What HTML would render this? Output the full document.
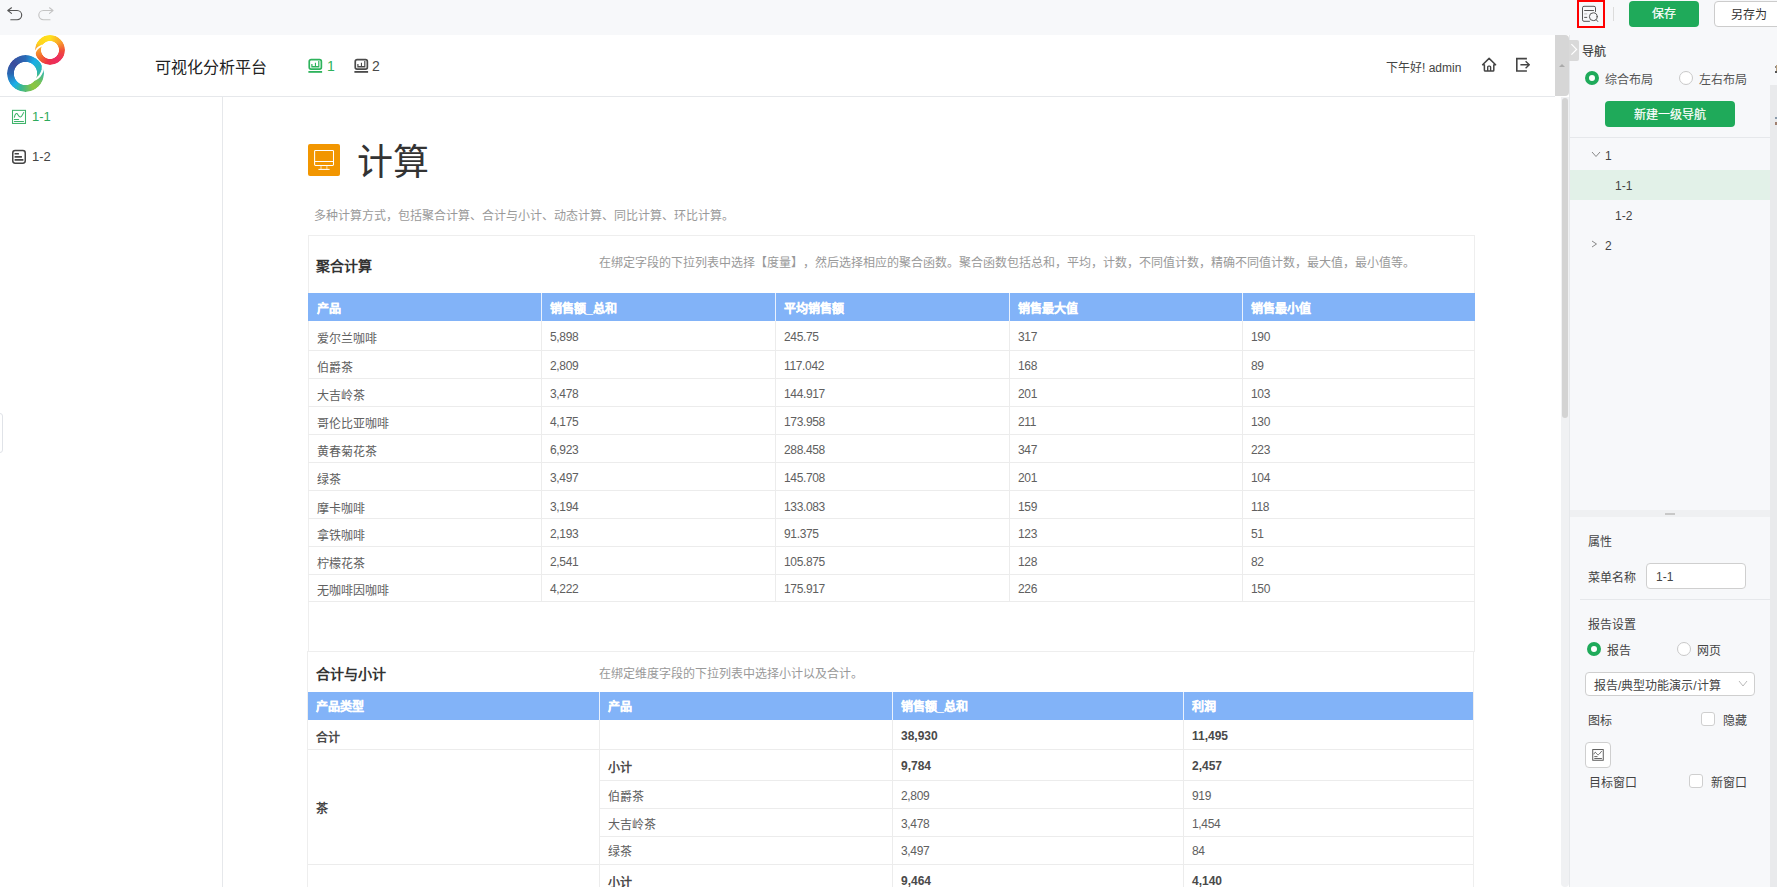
<!DOCTYPE html>
<html lang="zh-CN"><head><meta charset="utf-8">
<style>
*{box-sizing:border-box;margin:0;padding:0}
html,body{width:1777px;height:887px;overflow:hidden;background:#fff;text-spacing-trim:space-all;font-family:"Liberation Sans",sans-serif;color:#333}
.a{position:absolute;white-space:nowrap}
.t12{font-size:12px;line-height:16px}
table.g{border-collapse:collapse;table-layout:fixed;position:absolute}
table.g td,table.g th{border:1px solid #ebebeb;font-size:12px;color:#555;text-align:left;padding:0 0 0 8px;white-space:nowrap;font-weight:normal;line-height:14px}
table.g th{background:#80b4f6;color:#fff;font-weight:bold;border-color:#80b4f6;border-left-color:#e8f0fb}
table.g th:first-child{border-left-color:#80b4f6}
table.g td.b{font-weight:bold;color:#444}
</style></head><body>
<!-- toolbar -->
<div class="a" style="left:0;top:0;width:1777px;height:35px;background:#f7f8fa"></div>
<svg class="a" style="left:0;top:0" width="64" height="32" viewBox="0 0 64 32">
 <g fill="none" stroke-width="1.15" stroke-linecap="round" stroke-linejoin="round">
  <path d="M11.5 7.8 L7.8 10.5 L11.5 13.4 M7.8 10.5 H17.1 A4.6 4.6 0 0 1 17.1 19.7 H10.8" stroke="#555"/>
  <path d="M49.5 7.8 L53 10.5 L49.5 13.4 M53 10.5 H43.4 A4.6 4.6 0 0 0 43.4 19.7 H50" stroke="#c4c4c4"/>
 </g>
</svg>
<!-- preview-zoom icon with red box -->
<div class="a" style="left:1577px;top:0;width:28px;height:28px;border:2px solid #f00"></div>
<svg class="a" style="left:1577px;top:0" width="28" height="28" viewBox="0 0 28 28">
 <g fill="none" stroke="#555" stroke-width="1" stroke-linecap="round">
  <path d="M12.5 21.3 H7 Q5.5 21.3 5.5 19.8 V7.8 Q5.5 6.3 7 6.3 H17 Q18.5 6.3 18.5 7.8 V11.5"/>
  <path d="M7.6 10.5 H16.5 M7.6 17.4 H9.8"/>
  <path d="M7.6 13.9 H9.8" stroke="#bbb"/>
  <circle cx="16.3" cy="16.7" r="3.9"/>
  <path d="M19.1 19.6 L20.8 21.5"/>
 </g>
</svg>
<div class="a" style="left:1613px;top:7px;width:1px;height:14px;background:#dcdcdc"></div>
<div class="a" style="left:1629px;top:1px;width:70px;height:26px;background:#1faa5a;border-radius:4px;color:#fff;font-size:12px;line-height:26px;text-align:center;-webkit-text-stroke:0.2px #fff">保存</div>
<div class="a" style="left:1714px;top:1px;width:80px;height:26px;background:#fff;border:1px solid #ccc;border-radius:4px;color:#333;font-size:12px;line-height:26px;padding-left:16px">另存为</div>

<!-- main -->
<div class="a" style="left:0;top:35px;width:1555px;height:61px;background:#fff"></div>
<div class="a" style="left:0;top:96px;width:1555px;height:1px;background:#e6e8eb"></div>
<div class="a" style="left:0;top:97px;width:1561px;height:790px;background:#fff"></div>
<div class="a" style="left:222px;top:97px;width:1px;height:790px;background:#e6e8eb"></div>
<!-- header scrollbar piece -->
<div class="a" style="left:1555px;top:35px;width:14px;height:61px;background:#d6d6d6;border-radius:0 4px 4px 0"></div>
<div class="a" style="left:1559px;top:64px;width:0;height:0;border-left:3px solid transparent;border-right:3px solid transparent;border-bottom:3px solid #aaa"></div>
<!-- content scrollbar -->
<div class="a" style="left:1561px;top:97px;width:8px;height:790px;background:#f0f1f3;border-radius:0 0 4px 4px"></div>
<div class="a" style="left:1562px;top:98px;width:6px;height:320px;background:#d3d3d3;border-radius:3px"></div>
<!-- left tiny tab -->
<div class="a" style="left:-6px;top:413px;width:9px;height:40px;border:1px solid #e0e3e8;border-radius:3px"></div>

<!-- logo -->
<div class="a" style="left:7px;top:54.6px;width:37.2px;height:37.2px;border-radius:50%;background:conic-gradient(from 0deg,#2a6ab6 0deg,#1aaee6 35deg,#2fb6a8 85deg,#7cc352 125deg,#8dc63f 150deg,#3cb88e 195deg,#1aaee8 225deg,#2a66b2 270deg,#3b4b9c 310deg,#2a6ab6 360deg);-webkit-mask:radial-gradient(circle,transparent 11.2px,#000 11.9px);mask:radial-gradient(circle,transparent 11.2px,#000 11.9px)"></div>
<div class="a" style="left:35px;top:35px;width:30px;height:30px;border-radius:50%;background:conic-gradient(from 0deg,#ffe11c 0deg,#f9a52c 50deg,#f04a3a 95deg,#ec2d62 140deg,#ee3048 190deg,#f26c2e 235deg,#f8a22e 275deg,#ffd41e 300deg,#ffe11c 360deg);-webkit-mask:radial-gradient(circle,transparent 8.6px,#000 9.3px);mask:radial-gradient(circle,transparent 8.6px,#000 9.3px)"></div>
<svg class="a" style="left:0;top:0" width="80" height="100" viewBox="0 0 80 100">
 <path d="M42.86,64.78 L42.90,65.55 L42.90,66.30 L42.88,67.05 L42.82,67.78 L42.73,68.50 L42.62,69.21 L42.47,69.90 L42.30,70.57 L42.10,71.23 L41.88,71.87 L41.63,72.49 L41.36,73.09 L41.07,73.67 L40.75,74.22 L40.42,74.76 L40.07,75.27 L39.70,75.75 L39.31,76.21 L38.91,76.65 L38.50,77.06 L38.08,77.45 L37.64,77.81 L37.20,78.14 L36.75,78.45 L36.29,78.73 L35.83,78.98 L35.36,79.20 L34.89,79.40 L34.42,79.58 L33.95,79.73" fill="none" stroke="#fff" stroke-width="2.2" stroke-linecap="round"/>
 <path d="M34.35,54.39 L34.51,53.80 L34.70,53.23 L34.90,52.67 L35.12,52.13 L35.37,51.61 L35.63,51.10 L35.91,50.62 L36.20,50.15 L36.51,49.71 L36.83,49.28 L37.17,48.87 L37.52,48.49 L37.88,48.13 L38.25,47.79 L38.62,47.47 L39.01,47.17 L39.40,46.90 L39.80,46.65 L40.20,46.42 L40.61,46.21 L41.02,46.03 L41.43,45.87 L41.84,45.73 L42.25,45.62 L42.66,45.53 L43.07,45.45 L43.47,45.40 L43.87,45.38 L44.26,45.37 L44.65,45.38" fill="none" stroke="#fff" stroke-width="1.8" stroke-linecap="round"/>
</svg>
<div class="a" style="left:155px;top:58px;font-size:16px;line-height:20px;color:#222">可视化分析平台</div>


<!-- header nav -->
<svg class="a" style="left:306px;top:56px" width="20" height="20" viewBox="0 0 20 20">
 <rect x="3.25" y="3.65" width="12.1" height="9.5" rx="1.8" fill="none" stroke="#2eb35c" stroke-width="1.7"/>
 <path d="M5.3 8 H6.5 V10 H8.9 V6.7 H10 V10 H12.2 V5.1 H13.4 V11.6 H5.3 Z" fill="#2eb35c"/>
 <rect x="2.4" y="15" width="13.7" height="1.8" fill="#2eb35c"/>
</svg>
<div class="a" style="left:327px;top:57px;font-size:14px;line-height:18px;color:#2eb35c">1</div>
<svg class="a" style="left:352px;top:56px" width="20" height="20" viewBox="0 0 20 20">
 <rect x="3.25" y="3.65" width="12.1" height="9.5" rx="1.8" fill="none" stroke="#4a4a4a" stroke-width="1.7"/>
 <path d="M5.3 8 H6.5 V10 H8.9 V6.7 H10 V10 H12.2 V5.1 H13.4 V11.6 H5.3 Z" fill="#4a4a4a"/>
 <rect x="2.4" y="15" width="13.7" height="1.8" fill="#4a4a4a"/>
</svg>
<div class="a" style="left:372px;top:57px;font-size:14px;line-height:18px;color:#4a4a4a">2</div>
<div class="a t12" style="left:1386px;top:60px;color:#444">下午好! admin</div>
<svg class="a" style="left:1480px;top:56px" width="18" height="18" viewBox="0 0 18 18">
 <path d="M4.4 8.8 H2.6 L9.1 2.4 L15.6 8.8 H13.8 V14.2 Q13.8 15 13 15 H5.2 Q4.4 15 4.4 14.2 Z" fill="none" stroke="#444" stroke-width="1.5" stroke-linejoin="round"/>
 <path d="M7.7 15 V11 Q7.7 10.1 8.6 10.1 H9.7 Q10.6 10.1 10.6 11 V15" fill="none" stroke="#444" stroke-width="1.4"/>
</svg>
<svg class="a" style="left:1514px;top:56px" width="18" height="18" viewBox="0 0 18 18">
 <path d="M12.9 2.6 H2.8 V15 H12.9" fill="none" stroke="#444" stroke-width="1.6"/>
 <path d="M6.4 8.7 H15.2 M11.6 5.2 L15.3 8.7 L11.6 12.3" fill="none" stroke="#444" stroke-width="1.35" stroke-linejoin="round"/>
</svg>

<!-- sidebar -->
<svg class="a" style="left:11px;top:109px" width="16" height="16" viewBox="0 0 16 16">
 <rect x="1.5" y="1.35" width="13" height="13.1" fill="none" stroke="#3db36a" stroke-width="1.05"/>
 <path d="M3.3 8.6 C4 5 5.3 3.4 6.7 5.4 C7.8 7.2 8.3 8.4 9.6 8 C10.8 7.6 11.6 5 12.9 3.2" fill="none" stroke="#3db36a" stroke-width="1.05"/>
 <path d="M3.3 10.4 H7.6 M3.3 12.4 H12.5" stroke="#3db36a" stroke-width="1.05" stroke-linecap="round"/>
</svg>
<div class="a" style="left:32px;top:108px;font-size:13px;line-height:18px;color:#2eaa5c">1-1</div>
<svg class="a" style="left:11px;top:149px" width="16" height="16" viewBox="0 0 16 16">
 <rect x="1.75" y="1.6" width="12.5" height="12.55" rx="2.4" fill="none" stroke="#444" stroke-width="1.5"/>
 <path d="M3.6 4.8 H7.9 M3.6 7.9 H10.9 M3.6 10.9 H12.4" stroke="#444" stroke-width="1.6"/>
</svg>
<div class="a" style="left:32px;top:148px;font-size:13px;line-height:18px;color:#444">1-2</div>

<!-- page title -->
<div class="a" style="left:308px;top:144px;width:32px;height:32px;background:#f29600;border-radius:2px"></div>
<svg class="a" style="left:308px;top:144px" width="32" height="32" viewBox="0 0 32 32">
 <rect x="6.6" y="6.4" width="18.9" height="15" rx="0.9" fill="none" stroke="#fff" stroke-width="1.05"/>
 <path d="M6.6 17.5 H25.5" stroke="#fff" stroke-width="1.05"/>
 <path d="M13 21.9 V25 M18.9 21.9 V25" stroke="#fde3b8" stroke-width="0.9"/>
 <path d="M10.8 25.4 H21.2" stroke="#fff" stroke-width="1" stroke-linecap="round"/>
</svg>
<div class="a" style="left:357px;top:141px;font-size:36px;line-height:44px;color:#333">计算</div>
<div class="a t12" style="left:314px;top:208px;color:#999">多种计算方式，包括聚合计算、合计与小计、动态计算、同比计算、环比计算。</div>

<div class="a" style="left:308px;top:235px;width:1167px;height:417px;border:1px solid #eeeeee;background:#fff"></div>
<div class="a" style="left:316px;top:258px;font-size:14px;line-height:16px;font-weight:bold;color:#333">聚合计算</div>
<div class="a t12" style="left:599px;top:255px;color:#999">在绑定字段的下拉列表中选择【度量】，然后选择相应的聚合函数。聚合函数包括总和，平均，计数，不同值计数，精确不同值计数，最大值，最小值等。</div>
<div class="a" style="left:308px;top:293px;width:1167px;height:28px;background:#82b3f8"></div>
<div class="a" style="left:541px;top:293px;width:1px;height:28px;background:#e9f1fd"></div>
<div class="a" style="left:775px;top:293px;width:1px;height:28px;background:#e9f1fd"></div>
<div class="a" style="left:1009px;top:293px;width:1px;height:28px;background:#e9f1fd"></div>
<div class="a" style="left:1242px;top:293px;width:1px;height:28px;background:#e9f1fd"></div>
<div class="a t12" style="left:317px;top:301px;color:#fff;font-weight:bold;-webkit-text-stroke:0.25px #fff">产品</div>
<div class="a t12" style="left:550px;top:301px;color:#fff;font-weight:bold;-webkit-text-stroke:0.25px #fff">销售额_总和</div>
<div class="a t12" style="left:784px;top:301px;color:#fff;font-weight:bold;-webkit-text-stroke:0.25px #fff">平均销售额</div>
<div class="a t12" style="left:1018px;top:301px;color:#fff;font-weight:bold;-webkit-text-stroke:0.25px #fff">销售最大值</div>
<div class="a t12" style="left:1251px;top:301px;color:#fff;font-weight:bold;-webkit-text-stroke:0.25px #fff">销售最小值</div>
<div class="a" style="left:541px;top:321px;width:1px;height:281px;background:#ececec"></div>
<div class="a" style="left:775px;top:321px;width:1px;height:281px;background:#ececec"></div>
<div class="a" style="left:1009px;top:321px;width:1px;height:281px;background:#ececec"></div>
<div class="a" style="left:1242px;top:321px;width:1px;height:281px;background:#ececec"></div>
<div class="a" style="left:308px;top:350px;width:1167px;height:1px;background:#ececec"></div>
<div class="a" style="left:308px;top:378px;width:1167px;height:1px;background:#ececec"></div>
<div class="a" style="left:308px;top:406px;width:1167px;height:1px;background:#ececec"></div>
<div class="a" style="left:308px;top:434px;width:1167px;height:1px;background:#ececec"></div>
<div class="a" style="left:308px;top:462px;width:1167px;height:1px;background:#ececec"></div>
<div class="a" style="left:308px;top:490px;width:1167px;height:1px;background:#ececec"></div>
<div class="a" style="left:308px;top:518px;width:1167px;height:1px;background:#ececec"></div>
<div class="a" style="left:308px;top:546px;width:1167px;height:1px;background:#ececec"></div>
<div class="a" style="left:308px;top:574px;width:1167px;height:1px;background:#ececec"></div>
<div class="a" style="left:308px;top:601px;width:1167px;height:1px;background:#ececec"></div>
<div class="a t12" style="left:317px;top:331px;color:#606060">爱尔兰咖啡</div>
<div class="a t12" style="left:550px;top:329px;color:#606060;letter-spacing:-0.35px">5,898</div>
<div class="a t12" style="left:784px;top:329px;color:#606060;letter-spacing:-0.35px">245.75</div>
<div class="a t12" style="left:1018px;top:329px;color:#606060;letter-spacing:-0.35px">317</div>
<div class="a t12" style="left:1251px;top:329px;color:#606060;letter-spacing:-0.35px">190</div>
<div class="a t12" style="left:317px;top:360px;color:#606060">伯爵茶</div>
<div class="a t12" style="left:550px;top:358px;color:#606060;letter-spacing:-0.35px">2,809</div>
<div class="a t12" style="left:784px;top:358px;color:#606060;letter-spacing:-0.35px">117.042</div>
<div class="a t12" style="left:1018px;top:358px;color:#606060;letter-spacing:-0.35px">168</div>
<div class="a t12" style="left:1251px;top:358px;color:#606060;letter-spacing:-0.35px">89</div>
<div class="a t12" style="left:317px;top:388px;color:#606060">大吉岭茶</div>
<div class="a t12" style="left:550px;top:386px;color:#606060;letter-spacing:-0.35px">3,478</div>
<div class="a t12" style="left:784px;top:386px;color:#606060;letter-spacing:-0.35px">144.917</div>
<div class="a t12" style="left:1018px;top:386px;color:#606060;letter-spacing:-0.35px">201</div>
<div class="a t12" style="left:1251px;top:386px;color:#606060;letter-spacing:-0.35px">103</div>
<div class="a t12" style="left:317px;top:416px;color:#606060">哥伦比亚咖啡</div>
<div class="a t12" style="left:550px;top:414px;color:#606060;letter-spacing:-0.35px">4,175</div>
<div class="a t12" style="left:784px;top:414px;color:#606060;letter-spacing:-0.35px">173.958</div>
<div class="a t12" style="left:1018px;top:414px;color:#606060;letter-spacing:-0.35px">211</div>
<div class="a t12" style="left:1251px;top:414px;color:#606060;letter-spacing:-0.35px">130</div>
<div class="a t12" style="left:317px;top:444px;color:#606060">黄春菊花茶</div>
<div class="a t12" style="left:550px;top:442px;color:#606060;letter-spacing:-0.35px">6,923</div>
<div class="a t12" style="left:784px;top:442px;color:#606060;letter-spacing:-0.35px">288.458</div>
<div class="a t12" style="left:1018px;top:442px;color:#606060;letter-spacing:-0.35px">347</div>
<div class="a t12" style="left:1251px;top:442px;color:#606060;letter-spacing:-0.35px">223</div>
<div class="a t12" style="left:317px;top:472px;color:#606060">绿茶</div>
<div class="a t12" style="left:550px;top:470px;color:#606060;letter-spacing:-0.35px">3,497</div>
<div class="a t12" style="left:784px;top:470px;color:#606060;letter-spacing:-0.35px">145.708</div>
<div class="a t12" style="left:1018px;top:470px;color:#606060;letter-spacing:-0.35px">201</div>
<div class="a t12" style="left:1251px;top:470px;color:#606060;letter-spacing:-0.35px">104</div>
<div class="a t12" style="left:317px;top:501px;color:#606060">摩卡咖啡</div>
<div class="a t12" style="left:550px;top:499px;color:#606060;letter-spacing:-0.35px">3,194</div>
<div class="a t12" style="left:784px;top:499px;color:#606060;letter-spacing:-0.35px">133.083</div>
<div class="a t12" style="left:1018px;top:499px;color:#606060;letter-spacing:-0.35px">159</div>
<div class="a t12" style="left:1251px;top:499px;color:#606060;letter-spacing:-0.35px">118</div>
<div class="a t12" style="left:317px;top:528px;color:#606060">拿铁咖啡</div>
<div class="a t12" style="left:550px;top:526px;color:#606060;letter-spacing:-0.35px">2,193</div>
<div class="a t12" style="left:784px;top:526px;color:#606060;letter-spacing:-0.35px">91.375</div>
<div class="a t12" style="left:1018px;top:526px;color:#606060;letter-spacing:-0.35px">123</div>
<div class="a t12" style="left:1251px;top:526px;color:#606060;letter-spacing:-0.35px">51</div>
<div class="a t12" style="left:317px;top:556px;color:#606060">柠檬花茶</div>
<div class="a t12" style="left:550px;top:554px;color:#606060;letter-spacing:-0.35px">2,541</div>
<div class="a t12" style="left:784px;top:554px;color:#606060;letter-spacing:-0.35px">105.875</div>
<div class="a t12" style="left:1018px;top:554px;color:#606060;letter-spacing:-0.35px">128</div>
<div class="a t12" style="left:1251px;top:554px;color:#606060;letter-spacing:-0.35px">82</div>
<div class="a t12" style="left:317px;top:583px;color:#606060">无咖啡因咖啡</div>
<div class="a t12" style="left:550px;top:581px;color:#606060;letter-spacing:-0.35px">4,222</div>
<div class="a t12" style="left:784px;top:581px;color:#606060;letter-spacing:-0.35px">175.917</div>
<div class="a t12" style="left:1018px;top:581px;color:#606060;letter-spacing:-0.35px">226</div>
<div class="a t12" style="left:1251px;top:581px;color:#606060;letter-spacing:-0.35px">150</div>
<div class="a" style="left:307px;top:651px;width:1167px;height:300px;border:1px solid #eeeeee;background:#fff"></div>
<div class="a" style="left:316px;top:666px;font-size:14px;line-height:16px;font-weight:bold;color:#333">合计与小计</div>
<div class="a t12" style="left:599px;top:666px;color:#999">在绑定维度字段的下拉列表中选择小计以及合计。</div>
<div class="a" style="left:308px;top:692px;width:1165px;height:28px;background:#82b3f8"></div>
<div class="a" style="left:599px;top:692px;width:1px;height:28px;background:#e9f1fd"></div>
<div class="a" style="left:892px;top:692px;width:1px;height:28px;background:#e9f1fd"></div>
<div class="a" style="left:1183px;top:692px;width:1px;height:28px;background:#e9f1fd"></div>
<div class="a t12" style="left:316px;top:699px;color:#fff;font-weight:bold;-webkit-text-stroke:0.25px #fff">产品类型</div>
<div class="a t12" style="left:608px;top:699px;color:#fff;font-weight:bold;-webkit-text-stroke:0.25px #fff">产品</div>
<div class="a t12" style="left:901px;top:699px;color:#fff;font-weight:bold;-webkit-text-stroke:0.25px #fff">销售额_总和</div>
<div class="a t12" style="left:1192px;top:699px;color:#fff;font-weight:bold;-webkit-text-stroke:0.25px #fff">利润</div>
<div class="a" style="left:599px;top:720px;width:1px;height:170px;background:#ececec"></div>
<div class="a" style="left:892px;top:720px;width:1px;height:170px;background:#ececec"></div>
<div class="a" style="left:1183px;top:720px;width:1px;height:170px;background:#ececec"></div>
<div class="a" style="left:308px;top:749px;width:1165px;height:1px;background:#ececec"></div>
<div class="a" style="left:599px;top:780px;width:874px;height:1px;background:#ececec"></div>
<div class="a" style="left:599px;top:808px;width:874px;height:1px;background:#ececec"></div>
<div class="a" style="left:599px;top:836px;width:874px;height:1px;background:#ececec"></div>
<div class="a" style="left:308px;top:864px;width:1165px;height:1px;background:#ececec"></div>
<div class="a" style="left:308px;top:895px;width:1165px;height:1px;background:#ececec"></div>
<div class="a t12" style="left:316px;top:730px;color:#4a4a4a;font-weight:bold">合计</div>
<div class="a t12" style="left:608px;top:728px;color:#606060;"></div>
<div class="a t12" style="left:901px;top:728px;color:#4a4a4a;font-weight:bold">38,930</div>
<div class="a t12" style="left:1192px;top:728px;color:#4a4a4a;font-weight:bold">11,495</div>
<div class="a t12" style="left:608px;top:760px;color:#4a4a4a;font-weight:bold">小计</div>
<div class="a t12" style="left:901px;top:758px;color:#4a4a4a;font-weight:bold">9,784</div>
<div class="a t12" style="left:1192px;top:758px;color:#4a4a4a;font-weight:bold">2,457</div>
<div class="a t12" style="left:608px;top:789px;color:#606060;">伯爵茶</div>
<div class="a t12" style="left:901px;top:788px;color:#606060;;letter-spacing:-0.35px">2,809</div>
<div class="a t12" style="left:1192px;top:788px;color:#606060;;letter-spacing:-0.35px">919</div>
<div class="a t12" style="left:608px;top:817px;color:#606060;">大吉岭茶</div>
<div class="a t12" style="left:901px;top:816px;color:#606060;;letter-spacing:-0.35px">3,478</div>
<div class="a t12" style="left:1192px;top:816px;color:#606060;;letter-spacing:-0.35px">1,454</div>
<div class="a t12" style="left:608px;top:844px;color:#606060;">绿茶</div>
<div class="a t12" style="left:901px;top:843px;color:#606060;;letter-spacing:-0.35px">3,497</div>
<div class="a t12" style="left:1192px;top:843px;color:#606060;;letter-spacing:-0.35px">84</div>
<div class="a t12" style="left:608px;top:875px;color:#4a4a4a;font-weight:bold">小计</div>
<div class="a t12" style="left:901px;top:873px;color:#4a4a4a;font-weight:bold">9,464</div>
<div class="a t12" style="left:1192px;top:873px;color:#4a4a4a;font-weight:bold">4,140</div>
<div class="a t12" style="left:316px;top:801px;color:#444;font-weight:bold">茶</div>
<div class="a" style="left:1569px;top:35px;width:208px;height:852px;background:#f7f8fa;border-left:1px solid #e6e8eb"></div>
<div class="a" style="left:1569px;top:40px;width:10px;height:21px;background:#d9d9d9;border-radius:0 2px 2px 0"></div>
<svg class="a" style="left:1569px;top:40px" width="10" height="21" viewBox="0 0 10 21"><path d="M2.4 4.2 L7.6 9.4 L2.4 14.6" fill="none" stroke="#fff" stroke-width="1.2"/></svg>
<div class="a t12" style="left:1582px;top:44px;color:#333;-webkit-text-stroke:0.15px #333">导航</div>
<div class="a" style="left:1585px;top:71px;width:14px;height:14px;border-radius:50%;border:4px solid #1faa5a;background:#fff"></div>
<div class="a t12" style="left:1605px;top:72px;color:#555">综合布局</div>
<div class="a" style="left:1679px;top:71px;width:14px;height:14px;border-radius:50%;border:1px solid #c9c9c9;background:#fff"></div>
<div class="a t12" style="left:1699px;top:72px;color:#555">左右布局</div>
<div class="a" style="left:1605px;top:101px;width:130px;height:26px;background:#1faa5a;border-radius:4px"></div>
<div class="a t12" style="left:1605px;top:107px;color:#fff;width:130px;text-align:center;-webkit-text-stroke:0.2px #fff">新建一级导航</div>
<div class="a" style="left:1570px;top:137px;width:200px;height:1px;background:#e6e8eb"></div>
<div class="a" style="left:1770px;top:85px;width:7px;height:802px;background:#e9eaec"></div>
<svg class="a" style="left:1588px;top:148px" width="16" height="12" viewBox="0 0 16 12"><path d="M4 4 L8 8.5 L12 4" fill="none" stroke="#888" stroke-width="1"/></svg>
<div class="a t12" style="left:1605px;top:148px;color:#444">1</div>
<div class="a" style="left:1570px;top:170px;width:200px;height:30px;background:#e2f1e8"></div>
<div class="a t12" style="left:1615px;top:178px;color:#444">1-1</div>
<div class="a t12" style="left:1615px;top:208px;color:#444">1-2</div>
<svg class="a" style="left:1588px;top:238px" width="12" height="12" viewBox="0 0 12 12"><path d="M4 3 L8.5 6 L4 9" fill="none" stroke="#888" stroke-width="1"/></svg>
<div class="a t12" style="left:1605px;top:238px;color:#444">2</div>
<div class="a" style="left:1570px;top:510px;width:200px;height:7px;background:#eff0f2"></div>
<div class="a" style="left:1665px;top:513px;width:10px;height:2px;background:#c8c8c8"></div>
<div class="a t12" style="left:1588px;top:534px;color:#444">属性</div>
<div class="a t12" style="left:1588px;top:570px;color:#444">菜单名称</div>
<div class="a" style="left:1646px;top:563px;width:100px;height:26px;background:#fff;border:1px solid #cfcfcf;border-radius:4px"></div>
<div class="a t12" style="left:1656px;top:569px;color:#444">1-1</div>
<div class="a" style="left:1580px;top:599px;width:190px;height:1px;background:#e6e8eb"></div>
<div class="a t12" style="left:1588px;top:617px;color:#444">报告设置</div>
<div class="a" style="left:1587px;top:642px;width:14px;height:14px;border-radius:50%;border:4px solid #1faa5a;background:#fff"></div>
<div class="a t12" style="left:1607px;top:643px;color:#444">报告</div>
<div class="a" style="left:1677px;top:642px;width:14px;height:14px;border-radius:50%;border:1px solid #c9c9c9;background:#fff"></div>
<div class="a t12" style="left:1697px;top:643px;color:#444">网页</div>
<div class="a" style="left:1585px;top:672px;width:170px;height:24px;background:#fff;border:1px solid #cfcfcf;border-radius:4px"></div>
<div class="a t12" style="left:1594px;top:678px;color:#444">报告/典型功能演示/计算</div>
<svg class="a" style="left:1736px;top:678px" width="14" height="12" viewBox="0 0 14 12"><path d="M3 3 L7 8 L11 3" fill="none" stroke="#bbb" stroke-width="1"/></svg>
<div class="a t12" style="left:1588px;top:713px;color:#444">图标</div>
<div class="a" style="left:1701px;top:712px;width:14px;height:14px;border-radius:3px;border:1px solid #cfcfcf;background:#fff"></div>
<div class="a t12" style="left:1723px;top:713px;color:#444">隐藏</div>
<div class="a" style="left:1585px;top:742px;width:26px;height:26px;background:#fff;border:1px solid #cfcfcf;border-radius:4px"></div>
<svg class="a" style="left:1590px;top:747px" width="16" height="16" viewBox="0 0 16 16"><rect x="2.75" y="2.55" width="10.5" height="10.7" fill="none" stroke="#555" stroke-width="0.95"/><path d="M3.9 7.3 C4.5 5.5 5.2 4.8 6 5.8 C6.8 6.8 7.5 8.2 8.6 7.6 C9.5 7 10.5 5.5 11.7 4.1" fill="none" stroke="#555" stroke-width="0.9"/><path d="M4.3 9.6 H7.5 M4.3 11.5 H11.9" stroke="#555" stroke-width="0.9"/></svg>
<div class="a t12" style="left:1589px;top:775px;color:#444">目标窗口</div>
<div class="a" style="left:1689px;top:774px;width:14px;height:14px;border-radius:3px;border:1px solid #cfcfcf;background:#fff"></div>
<div class="a t12" style="left:1711px;top:775px;color:#444">新窗口</div>
<div class="a" style="left:1775px;top:66px;width:2px;height:1.5px;background:#8a8a8a"></div>
<div class="a" style="left:1776px;top:65px;width:1px;height:7px;background:#b8a080"></div>
<div class="a" style="left:1775px;top:71px;width:2px;height:1.5px;background:#555"></div>
<div class="a" style="left:1775px;top:117px;width:2px;height:2px;background:#8899aa"></div>
<div class="a" style="left:1775px;top:122px;width:2px;height:3px;background:#a08070"></div>
</body></html>
